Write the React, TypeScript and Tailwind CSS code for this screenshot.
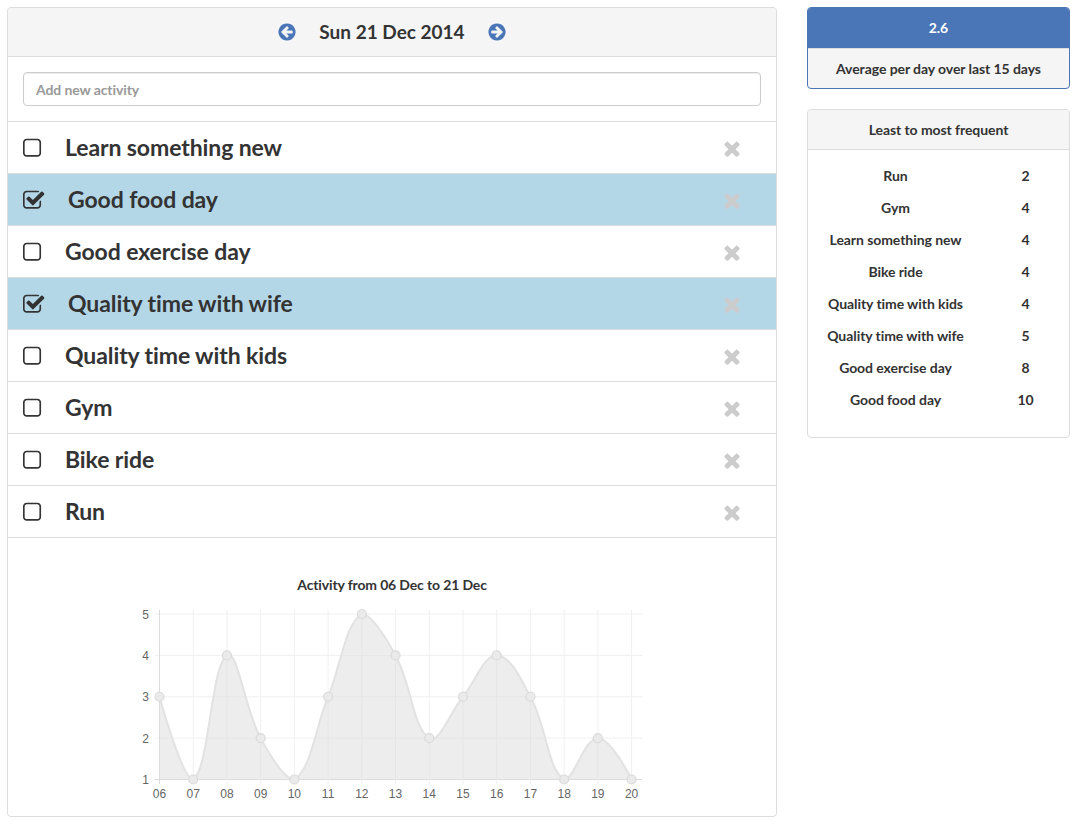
const activities = [
  { name: "Learn something new", done: false },
  { name: "Good food day", done: true },
  { name: "Good exercise day", done: false },
  { name: "Quality time with wife", done: true },
  { name: "Quality time with kids", done: false },
  { name: "Gym", done: false },
  { name: "Bike ride", done: false },
  { name: "Run", done: false },
];

const frequency: [string, number][] = [
  ["Run", 2],
  ["Gym", 4],
  ["Learn something new", 4],
  ["Bike ride", 4],
  ["Quality time with kids", 4],
  ["Quality time with wife", 5],
  ["Good exercise day", 8],
  ["Good food day", 10],
];

const labels = ["06", "07", "08", "09", "10", "11", "12", "13", "14", "15", "16", "17", "18", "19", "20"];
const values = [3, 1, 4, 2, 1, 3, 5, 4, 2, 3, 4, 3, 1, 2, 1];

const iconPaths = {
  square:
    "M1120 256h-832q-66 0-113 47t-47 113v832q0 66 47 113t113 47h832q66 0 113-47t47-113v-832q0-66-47-113t-113-47zm288 160v832q0 119-84.5 203.5t-203.5 84.5h-832q-119 0-203.5-84.5t-84.5-203.5v-832q0-119 84.5-203.5t203.5-84.5h832q119 0 203.5 84.5t84.5 203.5z",
  check:
    "M1408 930v318q0 119-84.5 203.5t-203.5 84.5h-832q-119 0-203.5-84.5t-84.5-203.5v-832q0-119 84.5-203.5t203.5-84.5h832q63 0 117 25 15 7 18 23 3 17-9 29l-49 49q-10 10-23 10-3 0-9-2-23-6-45-6h-832q-66 0-113 47t-47 113v832q0 66 47 113t113 47h832q66 0 113-47t47-113v-254q0-13 9-22l64-64q10-10 23-10 6 0 12 3 20 8 20 29zm231-489l-814 814q-24 24-57 24t-57-24l-430-430q-24-24-24-57t24-57l110-110q24-24 57-24t57 24l263 263 647-647q24-24 57-24t57 24l110 110q24 24 24 57t-24 57z",
  times:
    "M1298 1312q0 40-28 68l-136 136q-28 28-68 28t-68-28l-294-294-294 294q-28 28-68 28t-68-28l-136-136q-28-28-28-68t28-68l294-294-294-294q-28-28-28-68t28-68l136-136q28-28 68-28t68 28l294 294 294-294q28-28 68-28t68 28l136 136q28 28 28 68t-28 68l-294 294 294 294q28 28 28 68z",
  left:
    "M1408 960v-128q0-26-19-45t-45-19h-502l189-189q19-19 19-45t-19-45l-91-91q-18-18-45-18t-45 18l-362 362-91 91q-18 18-18 45t18 45l91 91 362 362q18 18 45 18t45-18l91-91q18-18 18-45t-18-45l-189-189h502q26 0 45-19t19-45zm256-64q0 209-103 385.5t-279.5 279.5-385.5 103-385.5-103-279.5-279.5-103-385.5 103-385.5 279.5-279.5 385.5-103 385.5 103 279.5 279.5 103 385.5z",
  right:
    "M1413 896q0-27-18-45l-91-91-362-362q-18-18-45-18t-45 18l-91 91q-18 18-18 45t18 45l189 189h-502q-26 0-45 19t-19 45v128q0 26 19 45t45 19h502l-189 189q-19 19-19 45t19 45l91 91q18 18 45 18t45-18l362-362 91-91q18-18 18-45zm251 0q0 209-103 385.5t-279.5 279.5-385.5 103-385.5-103-279.5-279.5-103-385.5 103-385.5 279.5-279.5 385.5-103 385.5 103 279.5 279.5 103 385.5z",
};

function Icon({ name, size, className }: { name: keyof typeof iconPaths; size: number; className?: string }) {
  return (
    <svg width={size} height={size} viewBox="0 0 1792 1792" fill="currentColor" className={`block shrink-0 ${className ?? ""}`}>
      <path d={iconPaths[name]} />
    </svg>
  );
}

// svg sits at page x=132, y=600
const left = 27.5;
const stepX = 33.72;
const top = 14;
const bottom = 179.5;
const xAt = (i: number) => left + i * stepX;
const yAt = (v: number) => bottom - ((v - 1) / 4) * (bottom - top);

function ActivityChart() {
  const pts = values.map((v, i) => ({ x: xAt(i), y: yAt(v) }));
  const clampY = (y: number) => Math.min(bottom, Math.max(top, y));
  const ctrl = pts.map((p, i) => {
    if (i === 0 || i === pts.length - 1) return { inX: p.x, inY: p.y, outX: p.x, outY: p.y };
    const a = pts[i - 1];
    const b = pts[i + 1];
    const d1 = Math.hypot(p.x - a.x, p.y - a.y);
    const d2 = Math.hypot(b.x - p.x, b.y - p.y);
    const fa = (0.4 * d1) / (d1 + d2);
    const fb = (0.4 * d2) / (d1 + d2);
    return {
      inX: p.x - fa * (b.x - a.x),
      inY: clampY(p.y - fa * (b.y - a.y)),
      outX: p.x + fb * (b.x - a.x),
      outY: clampY(p.y + fb * (b.y - a.y)),
    };
  });
  let line = `M${pts[0].x} ${pts[0].y}`;
  for (let i = 1; i < pts.length; i++) {
    line += ` C${ctrl[i - 1].outX} ${ctrl[i - 1].outY} ${ctrl[i].inX} ${ctrl[i].inY} ${pts[i].x} ${pts[i].y}`;
  }
  const area = `${line} L${pts[pts.length - 1].x} ${bottom} L${pts[0].x} ${bottom} Z`;

  return (
    <svg width={520} height={206} className="block">
      {[1, 2, 3, 4, 5].map((v) => (
        <g key={v}>
          <line x1={23} x2={510} y1={yAt(v)} y2={yAt(v)} stroke={v === 1 ? "#dcdcdc" : "#f0f0f0"} />
          <text x={17} y={yAt(v) + 4.5} textAnchor="end" fontSize={12} fill="#666" fontFamily="Liberation Sans, sans-serif">
            {v}
          </text>
        </g>
      ))}
      {labels.map((l, i) => (
        <g key={l}>
          <line x1={xAt(i)} x2={xAt(i)} y1={10} y2={184} stroke={i === 0 ? "#dcdcdc" : "#f0f0f0"} />
          <text x={xAt(i)} y={197.5} textAnchor="middle" fontSize={12} fill="#666" fontFamily="Liberation Sans, sans-serif">
            {l}
          </text>
        </g>
      ))}
      <path d={area} fill="rgba(220,220,220,0.5)" />
      <path d={line} fill="none" stroke="#e2e2e2" strokeWidth={2} />
      {pts.map((p, i) => (
        <circle key={i} cx={p.x} cy={p.y} r={4.5} fill="#eaeaea" stroke="#dadada" strokeWidth={1.2} />
      ))}
    </svg>
  );
}

function ActivityRow({ name, done }: { name: string; done: boolean }) {
  return (
    <div className={`flex h-[52px] items-center border-b border-[#ddd] pr-[30px] pl-[15px] ${done ? "bg-[#b4d7e7]" : ""}`}>
      <Icon name={done ? "check" : "square"} size={23} className="translate-y-px text-[#333]" />
      <span className={`flex-1 text-[23px] leading-none font-bold tracking-[-0.1px] text-[#333] ${done ? "ml-[22px]" : "ml-[19px]"}`}>
        {name}
      </span>
      <Icon name="times" size={23} className="translate-y-px text-[#ccc]" />
    </div>
  );
}

export default function App() {
  return (
    <div className="flex items-start gap-[30px] p-[7px] font-['Lato',sans-serif] text-[#333]">
      <div className="w-[770px] shrink-0 overflow-hidden rounded border border-[#ddd] bg-white">
        <div className="flex h-[49px] items-center justify-center border-b border-[#ddd] bg-[#f5f5f5]">
          <Icon name="left" size={20} className="text-[#4a76b8]" />
          <span className="mx-[22px] -translate-y-px text-[19px] leading-none font-bold text-[#333]">Sun 21 Dec 2014</span>
          <Icon name="right" size={20} className="text-[#4a76b8]" />
        </div>
        <div className="border-b border-[#ddd] p-[15px]">
          <input
            placeholder="Add new activity"
            className="block h-[34px] w-full rounded border border-[#ccc] px-3 text-sm font-bold tracking-[-0.1px] shadow-[inset_0_1px_1px_rgba(0,0,0,0.075)] outline-none placeholder:text-[#999]"
          />
        </div>
        {activities.map((a) => (
          <ActivityRow key={a.name} name={a.name} done={a.done} />
        ))}
        <div className="pt-[37px] pb-[10px]">
          <p className="text-center text-sm leading-5 font-bold tracking-[-0.14px] text-[#333]">Activity from 06 Dec to 21 Dec</p>
          <div className="mt-[5px] flex justify-center">
            <ActivityChart />
          </div>
        </div>
      </div>

      <div className="flex w-[263px] shrink-0 flex-col gap-5 text-sm font-bold tracking-[-0.07px]">
        <div className="overflow-hidden rounded border border-[#4a76b8] bg-[#f5f5f5]">
          <div className="flex h-10 items-center justify-center bg-[#4a76b8] text-white">2.6</div>
          <div className="flex h-10 items-center justify-center border-t border-[#ddd]">Average per day over last 15 days</div>
        </div>
        <div className="overflow-hidden rounded border border-[#ddd] bg-white">
          <div className="flex h-10 items-center justify-center border-b border-[#ddd] bg-[#f5f5f5]">Least to most frequent</div>
          <div className="pt-[10px] pb-[21px]">
            {frequency.map(([name, count]) => (
              <div key={name} className="flex h-8 items-center">
                <span className="w-[175px] text-center">{name}</span>
                <span className="w-[85px] text-center">{count}</span>
              </div>
            ))}
          </div>
        </div>
      </div>
    </div>
  );
}
